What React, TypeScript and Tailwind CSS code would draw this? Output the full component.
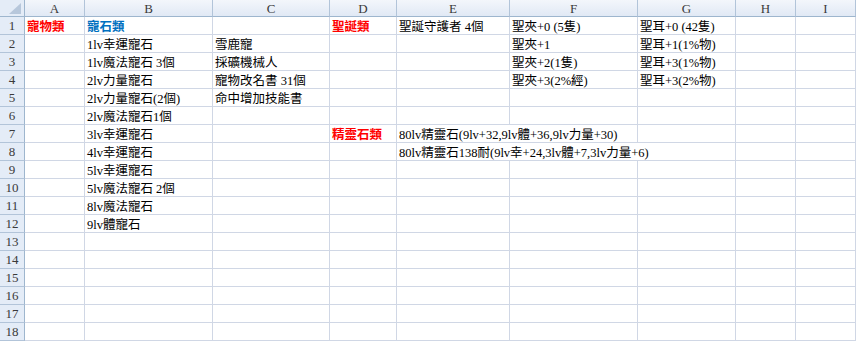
import React from "react";

type Cell = {
  col: number; // 0 = A
  text: string;
  span?: number;
  tone?: "red" | "blue";
};

const COLS = ["A", "B", "C", "D", "E", "F", "G", "H", "I"];
const ROW_COUNT = 18;

const data: Record<number, Cell[]> = {
  1: [
    { col: 0, text: "寵物類", tone: "red" },
    { col: 1, text: "寵石類", tone: "blue" },
    { col: 3, text: "聖誕類", tone: "red" },
    { col: 4, text: "聖誕守護者 4個" },
    { col: 5, text: "聖夾+0 (5隻)" },
    { col: 6, text: "聖耳+0 (42隻)" },
  ],
  2: [
    { col: 1, text: "1lv幸運寵石" },
    { col: 2, text: "雪鹿寵" },
    { col: 5, text: "聖夾+1" },
    { col: 6, text: "聖耳+1(1%物)" },
  ],
  3: [
    { col: 1, text: "1lv魔法寵石 3個" },
    { col: 2, text: "採礦機械人" },
    { col: 5, text: "聖夾+2(1隻)" },
    { col: 6, text: "聖耳+3(1%物)" },
  ],
  4: [
    { col: 1, text: "2lv力量寵石" },
    { col: 2, text: "寵物改名書 31個" },
    { col: 5, text: "聖夾+3(2%經)" },
    { col: 6, text: "聖耳+3(2%物)" },
  ],
  5: [
    { col: 1, text: "2lv力量寵石(2個)" },
    { col: 2, text: "命中增加技能書" },
  ],
  6: [{ col: 1, text: "2lv魔法寵石1個" }],
  7: [
    { col: 1, text: "3lv幸運寵石" },
    { col: 3, text: "精靈石類", tone: "red" },
    { col: 4, text: "80lv精靈石(9lv+32,9lv體+36,9lv力量+30)", span: 2 },
  ],
  8: [
    { col: 1, text: "4lv幸運寵石" },
    { col: 4, text: "80lv精靈石138耐(9lv幸+24,3lv體+7,3lv力量+6)", span: 3 },
  ],
  9: [{ col: 1, text: "5lv幸運寵石" }],
  10: [{ col: 1, text: "5lv魔法寵石 2個" }],
  11: [{ col: 1, text: "8lv魔法寵石" }],
  12: [{ col: 1, text: "9lv體寵石" }],
};

const gridCols =
  "grid grid-cols-[25px_60px_128px_117px_67px_113px_128px_98px_60px_60px]";

const cellFont = {
  fontFamily: '"Liberation Serif", "Noto Sans CJK TC", serif',
};

const spanClass: Record<number, string> = {
  1: "col-span-1",
  2: "col-span-2",
  3: "col-span-3",
};

const toneClass = {
  red: "text-[#ff0000] font-bold",
  blue: "text-[#0070c0] font-bold",
};

function buildRow(row: number) {
  const cells = data[row] ?? [];
  const out: React.ReactNode[] = [];
  let c = 0;
  while (c < COLS.length) {
    const cell = cells.find((x) => x.col === c);
    const span = cell?.span ?? 1;
    out.push(
      <div
        key={c}
        className={`${spanClass[span]} h-[18px] border-r border-b border-[#d0d7e5] flex items-center pl-[2px] pt-[2px] whitespace-nowrap overflow-hidden text-[12.5px] leading-[16px] ${
          cell?.tone ? toneClass[cell.tone] : "text-black"
        }`}
        style={cellFont}
      >
        {cell?.text}
      </div>
    );
    c += span;
  }
  return out;
}

export default function App() {
  return (
    <div className="w-[856px] h-[342px] bg-white overflow-hidden">
      {/* column headers */}
      <div className={gridCols}>
        <div className="h-[17px] border-r border-b border-[#9eb6ce] bg-[#e4ecf7] relative">
          <svg
            width="24"
            height="16"
            viewBox="0 0 24 16"
            className="absolute left-0 top-0"
          >
            <polygon points="21,3 21,14 9,14" fill="#b7c7db" />
          </svg>
        </div>
        {COLS.map((c) => (
          <div
            key={c}
            className="h-[17px] border-r border-b border-r-[#b2c4d9] border-b-[#9eb6ce] bg-gradient-to-b from-[#f3f6fb] to-[#e1e9f5] flex items-center justify-center text-[13px] leading-none text-[#3a3a3a]"
            style={{ fontFamily: '"Liberation Serif", serif' }}
          >
            {c}
          </div>
        ))}
      </div>

      {Array.from({ length: ROW_COUNT }, (_, i) => i + 1).map((row) => (
        <div key={row} className={gridCols}>
          <div
            className="h-[18px] border-r border-b border-r-[#9eb6ce] border-b-[#b2c4d9] bg-[#e4ecf7] flex items-center justify-center text-[13px] leading-none text-[#3a3a3a]"
            style={{ fontFamily: '"Liberation Serif", serif' }}
          >
            {row}
          </div>
          {buildRow(row)}
        </div>
      ))}
    </div>
  );
}
